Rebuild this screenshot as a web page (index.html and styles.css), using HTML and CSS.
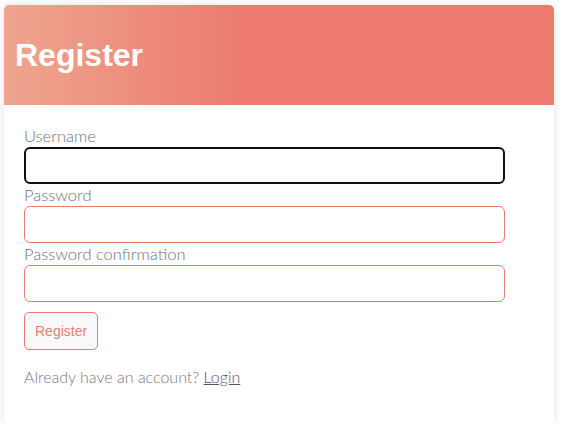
FILE: index.html
```html
<!DOCTYPE html>
<html lang="en">
<head>
<meta charset="utf-8">
<title>Register</title>
<link rel="stylesheet" href="styles.css">
</head>
<body>
<div class="card">
  <div class="card-header">
    <h1 class="title">Register</h1>
  </div>
  <form class="card-body">
    <label class="field-label" for="username">Username</label>
    <input class="field-input is-focused" id="username" type="text">
    <label class="field-label" for="password">Password</label>
    <input class="field-input" id="password" type="password">
    <label class="field-label" for="password2">Password confirmation</label>
    <input class="field-input" id="password2" type="password">
    <div class="actions">
      <button class="btn" type="button">Register</button>
    </div>
    <p class="switch">Already have an account? <a class="switch-link" href="#">Login</a></p>
  </form>
</div>
</body>
</html>
```
FILE: styles.css
```css
html, body {
  margin: 0;
  background: #ffffff;
}
body {
  padding: 5px 8px 0 4px;
  font-family: "Lato", "Open Sans", sans-serif;
}
.card {
  width: 550px;
  background: #fff;
  border-radius: 5px;
  box-shadow: 0 0 10px rgba(0, 0, 0, 0.12);
  overflow: hidden;
}
.card-header {
  height: 100px;
  display: flex;
  align-items: center;
  padding: 0 11px;
  background: linear-gradient(to right, #eea58f 0%, #ec7a6e 44%, #ec7a6e 100%);
}
.title {
  margin: 0;
  padding-top: 1px;
  font-family: "Liberation Sans", Arial, sans-serif;
  font-weight: 700;
  font-size: 32px;
  color: #fff;
}
.card-body {
  display: flex;
  flex-direction: column;
  align-items: flex-start;
  padding: 20px 20px 35px;
}
.field-label {
  display: block;
  font-size: 16.5px;
  font-weight: 300;
  line-height: 22px;
  color: #737373;
}
.field-input {
  box-sizing: border-box;
  width: 481px;
  height: 37px;
  margin: 0;
  border: 1px solid #ec7a6e;
  border-radius: 6px;
  background: #fff;
  outline: none;
  font-size: 16px;
}
.field-input.is-focused {
  border: 2px solid #111;
}
.actions {
  margin-top: 10px;
}
.btn {
  box-sizing: border-box;
  height: 38px;
  padding: 0 10px;
  border: 1px solid #ec7a6e;
  border-radius: 5px;
  background: #f9f9f9;
  color: #ee7d72;
  font-family: "Liberation Sans", Arial, sans-serif;
  font-size: 14px;
}
.switch {
  margin: 15px 0 0;
  font-size: 16px;
  font-weight: 300;
  line-height: 24px;
  color: #7a7a7a;
}
.switch-link {
  color: #555;
  text-decoration: underline;
}
```
